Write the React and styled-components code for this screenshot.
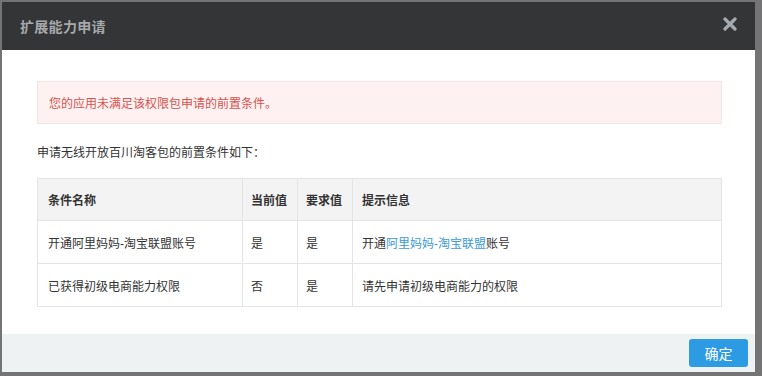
import React from 'react';
import styled, { createGlobalStyle } from 'styled-components';

const GlobalStyle = createGlobalStyle`
  html, body {
    margin: 0;
    padding: 0;
  }
  body {
    font-family: "Liberation Sans", "Noto Sans CJK SC", sans-serif;
    font-size: 12px;
    color: #333;
  }
`;

const Backdrop = styled.div`
  width: 762px;
  height: 376px;
  box-sizing: border-box;
  padding: 2px 7px 4px 2px;
  background: #747474;
  display: flex;
`;

const Modal = styled.div`
  flex: 1;
  display: flex;
  flex-direction: column;
  background: #fff;
`;

const Header = styled.div`
  height: 48px;
  flex-shrink: 0;
  background: #333537;
  display: flex;
  align-items: center;
  justify-content: space-between;
  padding: 0 18px 0 18px;
`;

const Title = styled.div`
  font-size: 14px;
  font-weight: bold;
  color: #a6a8aa;
  letter-spacing: 0.3px;
`;

const Close = styled.div`
  width: 14px;
  height: 14px;
  margin-top: -5px;
  display: flex;
`;

const Body = styled.div`
  flex: 1;
  padding: 31px 33px 0 35px;
`;

const Alert = styled.div`
  height: 43px;
  box-sizing: border-box;
  background: #fdf1f1;
  border: 1px solid #f6e3e3;
  color: #d9534f;
  display: flex;
  align-items: center;
  padding-left: 11px;
`;

const Intro = styled.div`
  margin-top: 21px;
  line-height: 16px;
`;

const Table = styled.table`
  margin-top: 17px;
  width: 100%;
  table-layout: fixed;
  border-collapse: collapse;
  border: 1px solid #e4e4e4;
`;

const Th = styled.th`
  box-sizing: border-box;
  height: 42px;
  background: #f3f3f3;
  text-align: left;
  font-weight: bold;
  padding: 0 ${(p) => p.$pad || 10}px;
  border: 1px solid #e4e4e4;
  white-space: nowrap;
  width: ${(p) => p.$w || 'auto'};
`;

const Td = styled.td`
  height: 42px;
  padding: 0 ${(p) => p.$pad || 10}px;
  border: 1px solid #e4e4e4;
  white-space: nowrap;
`;

const Link = styled.a`
  color: #3a9ad9;
  text-decoration: none;
`;

const Footer = styled.div`
  height: 38px;
  flex-shrink: 0;
  background: #eef2f3;
  display: flex;
  align-items: center;
  justify-content: flex-end;
  padding-right: 7px;
`;

const Button = styled.button`
  width: 59px;
  height: 28px;
  border: none;
  border-radius: 3px;
  background: #2d9be3;
  color: #fff;
  font-family: inherit;
  font-size: 14px;
  padding: 0;
`;

const rows = [
  { name: '开通阿里妈妈-淘宝联盟账号', cur: '是', req: '是', tip: 'link' },
  { name: '已获得初级电商能力权限', cur: '否', req: '是', tip: '请先申请初级电商能力的权限' },
];

export default function App() {
  return (
    <>
      <GlobalStyle />
      <Backdrop>
        <Modal>
          <Header>
            <Title>扩展能力申请</Title>
            <Close>
              <svg width="14" height="14" viewBox="0 0 14 14">
                <path d="M2 2 L12 12 M12 2 L2 12" stroke="#a3abaf" strokeWidth="3.2" strokeLinecap="round" />
              </svg>
            </Close>
          </Header>
          <Body>
            <Alert>您的应用未满足该权限包申请的前置条件。</Alert>
            <Intro>申请无线开放百川淘客包的前置条件如下：</Intro>
            <Table>
              <thead>
                <tr>
                  <Th $w="205px">条件名称</Th>
                  <Th $w="55px" $pad={8}>当前值</Th>
                  <Th $w="55px" $pad={8}>要求值</Th>
                  <Th $pad={9}>提示信息</Th>
                </tr>
              </thead>
              <tbody>
                {rows.map((r) => (
                  <tr key={r.name}>
                    <Td>{r.name}</Td>
                    <Td $pad={8}>{r.cur}</Td>
                    <Td $pad={8}>{r.req}</Td>
                    <Td $pad={9}>
                      {r.tip === 'link' ? (
                        <>
                          开通<Link href="#">阿里妈妈-淘宝联盟</Link>账号
                        </>
                      ) : (
                        r.tip
                      )}
                    </Td>
                  </tr>
                ))}
              </tbody>
            </Table>
          </Body>
          <Footer>
            <Button>确定</Button>
          </Footer>
        </Modal>
      </Backdrop>
    </>
  );
}
